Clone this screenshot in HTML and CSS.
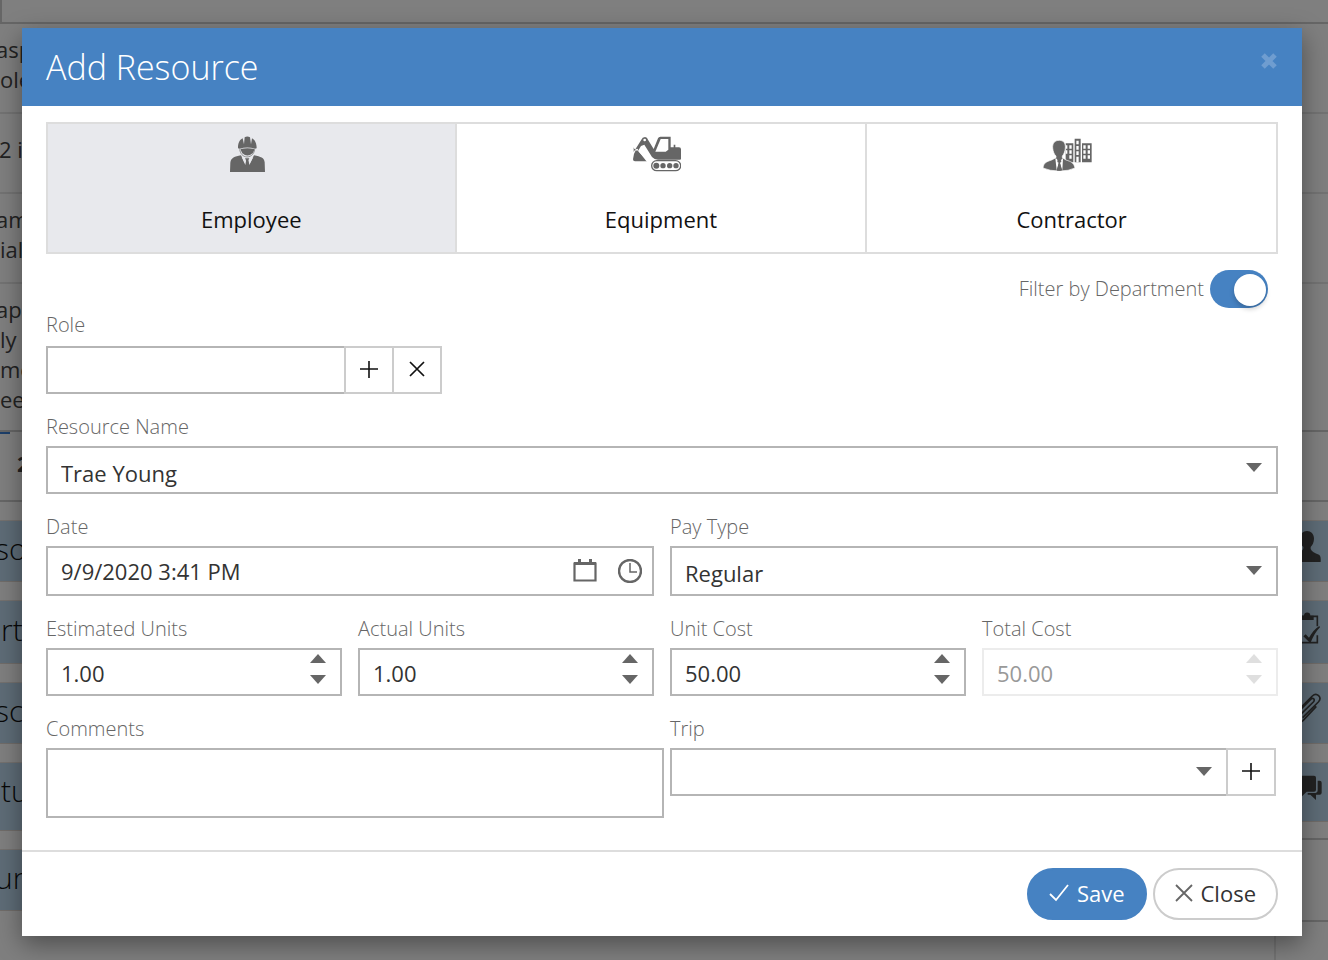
FILE: index.html
```html
<!DOCTYPE html>
<html lang="en">
<head>
<meta charset="utf-8">
<title>Add Resource</title>
<link rel="stylesheet" href="styles.css">
</head>
<body>
<div class="page" aria-hidden="true">
  <div class="page-top"></div>
  <div class="page-row">asp<br>ole</div>
  <div class="page-row page-row-single">2 i</div>
  <div class="page-row">am<br>ial</div>
  <div class="page-row page-row-tall">ap<br>ly<br>me<br>een</div>
  <div class="page-row page-row-total"><span class="marker"></span><b>2</b></div>
  <div class="page-columns">
    <div class="sections">
      <div class="section">so</div>
      <div class="section section-mid section-inset">rt</div>
      <div class="section">sc</div>
      <div class="section section-large section-inset">tu</div>
      <div class="section">urc</div>
    </div>
    <div class="sections sections-right">
      <div class="section"><svg width="28" height="34" viewBox="108 150 84 102"><path d="M147 153c12 0 21 9 21 23 0 11-5 20-10 25v6c3 8 12 13 25 17 5 3 6 12 5 22h-80c0-16 2-22 10-26 10-4 17-8 18-15v-4c-6-6-10-14-10-25 0-14 9-23 21-23z"/></svg></div>
      <div class="section section-mid"><svg width="28" height="34" viewBox="104 390 84 102"><path d="M112 400v85h62v-22M112 406h62v30" fill="none" stroke="#444" stroke-width="5"/><path d="M126 404h8a9 9 0 1 1 19 0h10v13h-37zM132 466l7-6 10 10c8-14 18-27 31-35l2 4c-12 12-21 28-29 48z"/></svg></div>
      <div class="section"><svg width="28" height="34" viewBox="108 642 84 102"><path d="M134 719l47-47c13-15-5-30-18-18l-52 52c-16 18 8 38 24 22l40-43M122 715l44-43c7-8-1-14-8-8l-36 36" fill="none" stroke="#444" stroke-width="5"/></svg></div>
      <div class="section section-last"><svg width="28" height="34" viewBox="108 876 84 102"><path d="M114 890h54q6 0 6 6v36q0 6-6 6h-22l-14 14v-14h-18zM179 905h6q6 0 6 6v30q0 6-6 6h-11v16l-17-16h-8v-5h24q6 0 6-8z"/></svg></div>
      <div class="page-line"></div>
      <div class="page-line page-line-low"></div>
      <div class="page-edge"></div>
    </div>
  </div>
</div>

<div class="overlay">
<form class="dialog" role="dialog" aria-labelledby="dialog-title">
  <header class="dialog-header">
    <h1 class="dialog-title" id="dialog-title">Add Resource</h1>
    <button class="dismiss" type="button" aria-label="Dismiss"><svg width="18" height="18" viewBox="0 0 18 18"><path d="M3 3l12 12M15 3L3 15" stroke="#6f9dd0" stroke-width="5"/></svg></button>
  </header>

  <div class="dialog-body">
    <div class="tabs">
      <button class="tab tab-active" type="button">
        <svg class="tab-icon" width="35" height="36" viewBox="90 50 105 108"><path d="M114 87c0-16 4-25 14-30l4 18 2-21q8-5 16 0l3 21 3-18c10 6 14 15 14 30l-5 1q-23-7-46 0z"/><path d="M122 89q20-5 41 0v3l-5 10q-16 13-31 0l-5-10z"/><path d="M119 90c2 13 9 22 22 23 14-1 21-10 23-23" fill="none" stroke="#666" stroke-width="2"/><path d="M123 108l11 23 4-8-3-6h13l-3 6 5 8 12-23c21 5 30 6 32 21l1 29H90l1-28c2-15 13-18 32-22z"/><path d="M125 113l11 24 2-12-5-7zM160 113l-12 24-2-12 5-7z" fill="#e8e9ed"/></svg>
        <span>Employee</span>
      </button>
      <button class="tab" type="button">
        <svg class="tab-icon" width="48" height="36" viewBox="96 50 144 108"><path d="M98 98l23-37q3-8 11-8 7 0 9 8l17 28 13-32q2-5 7-5h31v32h9v-8h5v8h11q6 0 6 6v28q0 3-3 3h-66q-11 0-18-8l-23-37-10 4-9 15 29 31H102q-6 0-6-6 1-17 9-29-7-1-7-7z"/><path d="M179 59h23v32l-8 6h-31z" fill="#fff"/><circle cx="131" cy="62" r="4" fill="#fff"/><circle cx="108" cy="91" r="3" fill="#fff"/><path d="M122 88l-8 9 27 35 9-2z" fill="#fff"/><rect x="152" y="124" width="87" height="30" rx="15" fill="#fff" stroke="#666" stroke-width="4"/><circle cx="166" cy="139" r="9"/><circle cx="186" cy="139" r="8"/><circle cx="206" cy="139" r="8"/><circle cx="225" cy="139" r="8"/></svg>
        <span>Equipment</span>
      </button>
      <button class="tab" type="button">
        <svg class="tab-icon" width="49" height="36" viewBox="70 47 147 108"><path d="M138 69h23v57h-23zM165 55h18v71h-18zM187 69h29v57h-29z"/><path d="M138 75h5v10h-5zM149 75h7v10h-7zM138 90h5v10h-5zM149 90h7v10h-7zM149 105h7v10h-7zM170 61h7v11h-7zM170 77h7v11h-7zM170 93h7v11h-7zM170 109h7v17h-7zM191 75h7v10h-7zM204 75h7v10h-7zM191 90h7v10h-7zM204 90h7v10h-7zM191 105h7v10h-7zM204 105h7v10h-7z" fill="#fff"/><path d="M119 60c13 0 19 9 18 23-1 11-5 20-9 24v5l11 7c15 5 23 7 27 24q-18 9-47 9t-49-9c2-17 12-19 26-24l13-7v-5c-5-4-9-13-10-24-1-14 6-23 20-23z" stroke="#fff" stroke-width="2"/><path d="M107 114l4 36 7-24-7-11zM130 114l-2 36-8-24 7-11z" fill="#fff"/><path d="M114 118l5 4 5-4 1 7-4 2 5 24h-14l5-24-4-2z"/></svg>
        <span>Contractor</span>
      </button>
    </div>

    <div class="filter">
      <label for="filter">Filter by Department</label>
      <input class="toggle" id="filter" type="checkbox" role="switch" checked>
    </div>

    <div class="fields">
      <div class="field field-role">
        <label for="role">Role</label>
        <div class="group group-role">
          <input class="control" id="role" type="text">
          <button class="add" type="button" aria-label="Add role"><svg width="18" height="18" viewBox="0 0 18 18"><path d="M9 0v17M0 8h18" stroke="#111" stroke-width="1.6"/></svg></button>
          <button class="add" type="button" aria-label="Clear role"><svg width="18" height="18" viewBox="0 0 18 18"><path d="M2 1l14 14M16 1L2 15" stroke="#111" stroke-width="1.7"/></svg></button>
        </div>
      </div>

      <div class="field field-full">
        <label for="name">Resource Name</label>
        <div class="stack">
          <select class="control control-low" id="name"><option>Trae Young</option></select>
          <svg class="arrow arrow-high" width="16" height="10" viewBox="0 0 16 10"><path d="M0 0h16L8 9z"/></svg>
        </div>
      </div>

      <div class="field field-half">
        <label for="date">Date</label>
        <div class="stack">
          <input class="control control-date" id="date" type="text" value="9/9/2020 3:41 PM">
          <div class="pickers">
            <button class="picker" type="button" aria-label="Pick date"><svg width="24" height="24" viewBox="0 0 24 24"><path d="M1.500 4.500h21v17h-21z" fill="none" stroke="#666" stroke-width="2.200"/><path d="M1 3h22v3H1zM5 0h3v4H5zM16 0h3v4h-3z"/></svg></button>
            <button class="picker" type="button" aria-label="Pick time"><svg width="24" height="24" viewBox="0 0 24 24"><circle cx="12" cy="12" r="11" fill="none" stroke="#666" stroke-width="2.4"/><path d="M12 4v9h7" fill="none" stroke="#666" stroke-width="1.500"/></svg></button>
          </div>
        </div>
      </div>

      <div class="field field-half">
        <label for="pay">Pay Type</label>
        <div class="stack">
          <select class="control control-tall" id="pay"><option>Regular</option></select>
          <svg class="arrow" width="16" height="10" viewBox="0 0 16 10"><path d="M0 0h16L8 9z"/></svg>
        </div>
      </div>

      <div class="field">
        <label for="estimated">Estimated Units</label>
        <div class="stack">
          <input class="control control-number" id="estimated" type="text" inputmode="decimal" value="1.00">
          <div class="spin">
            <button type="button" aria-label="Increase estimated units"><svg width="16" height="10" viewBox="0 0 16 10"><path d="M0 9h16L8 0z"/></svg></button>
            <button type="button" aria-label="Decrease estimated units"><svg width="16" height="10" viewBox="0 0 16 10"><path d="M0 1h16L8 10z"/></svg></button>
          </div>
        </div>
      </div>
      <div class="field">
        <label for="actual">Actual Units</label>
        <div class="stack">
          <input class="control control-number" id="actual" type="text" inputmode="decimal" value="1.00">
          <div class="spin">
            <button type="button" aria-label="Increase actual units"><svg width="16" height="10" viewBox="0 0 16 10"><path d="M0 9h16L8 0z"/></svg></button>
            <button type="button" aria-label="Decrease actual units"><svg width="16" height="10" viewBox="0 0 16 10"><path d="M0 1h16L8 10z"/></svg></button>
          </div>
        </div>
      </div>
      <div class="field">
        <label for="unit">Unit Cost</label>
        <div class="stack">
          <input class="control control-number" id="unit" type="text" inputmode="decimal" value="50.00">
          <div class="spin">
            <button type="button" aria-label="Increase unit cost"><svg width="16" height="10" viewBox="0 0 16 10"><path d="M0 9h16L8 0z"/></svg></button>
            <button type="button" aria-label="Decrease unit cost"><svg width="16" height="10" viewBox="0 0 16 10"><path d="M0 1h16L8 10z"/></svg></button>
          </div>
        </div>
      </div>
      <div class="field">
        <label for="total">Total Cost</label>
        <div class="stack">
          <input class="control control-number" id="total" type="text" value="50.00" disabled>
          <div class="spin spin-off">
            <button type="button" disabled aria-label="Increase total cost"><svg width="16" height="10" viewBox="0 0 16 10"><path d="M0 9h16L8 0z"/></svg></button>
            <button type="button" disabled aria-label="Decrease total cost"><svg width="16" height="10" viewBox="0 0 16 10"><path d="M0 1h16L8 10z"/></svg></button>
          </div>
        </div>
      </div>

      <div class="field field-half">
        <label for="comments">Comments</label>
        <textarea class="control comments" id="comments"></textarea>
      </div>
      <div class="field field-half">
        <label for="trip">Trip</label>
        <div class="group group-trip">
          <div class="stack">
            <select class="control" id="trip"><option></option></select>
            <svg class="arrow" width="16" height="10" viewBox="0 0 16 10"><path d="M0 0h16L8 9z"/></svg>
          </div>
          <button class="add" type="button" aria-label="Add trip"><svg width="18" height="18" viewBox="0 0 18 18"><path d="M9 0v17M0 8h18" stroke="#111" stroke-width="1.6"/></svg></button>
        </div>
      </div>
    </div>
  </div>

  <footer class="dialog-footer">
    <button class="action action-save" type="submit"><svg width="20" height="18" viewBox="0 0 20 18"><path d="M1 10l6 6L19 1" fill="none" stroke="#fff" stroke-width="1.8"/></svg>Save</button>
    <button class="action" type="button"><svg width="18" height="18" viewBox="0 0 18 18"><path d="M1 1l16 16M17 1L1 17" stroke="#666" stroke-width="1.8"/></svg>Close</button>
  </footer>
</form>
</div>
</body>
</html>
```

FILE: styles.css
```css
* {
  box-sizing: border-box;
}

body {
  margin: 0;
  min-height: 100vh;
  overflow: hidden;
  font-family: "Open Sans", sans-serif;
  font-size: 22px;
  color: #333;
  background: #fff;
}

button,
input,
select,
textarea {
  margin: 0;
  font: inherit;
  color: inherit;
}

button {
  padding: 0;
  border: 0;
  background: none;
  cursor: pointer;
}

svg {
  display: block;
  flex: none;
  fill: #666;
}

/* Page behind the dialog */

.page {
  height: 100vh;
  overflow: hidden;
  line-height: 30px;
  color: #444;
}

.page-top {
  height: 24px;
  border-bottom: 2px solid #ccc;
  border-left: 2px solid #ccc;
}

.page-row {
  height: 90px;
  padding-top: 10px;
  border-bottom: 2px solid #e6e6e6;
  text-indent: -4px;
}

.page-row-single {
  height: 80px;
  padding-top: 20px;
  text-indent: -1px;
}

.page-row-tall {
  height: 148px;
  border-color: #ccc;
}

.page-row-total {
  display: flex;
  flex-direction: column;
  height: 70px;
  padding: 0 0 0 17px;
  border-color: #ccc;
  text-indent: 0;
}

.marker {
  width: 10px;
  height: 2px;
  margin: 0 0 14px -17px;
  background: #3a7fd5;
}

.page-columns {
  display: flex;
  justify-content: space-between;
  padding-top: 18px;
}

.sections {
  display: flex;
  flex-direction: column;
  gap: 18px;
  width: 60px;
}

.section {
  display: flex;
  align-items: center;
  height: 62px;
  padding-bottom: 4px;
  border-top: 1px solid #e9e3df;
  border-bottom: 1px solid #e0d8d3;
  background: #bdd9ee;
  font-size: 30px;
  font-weight: 300;
  color: #111;
  text-indent: -5px;
}

.section-inset {
  text-indent: 1px;
}

.section-mid {
  height: 64px;
}

.section-large {
  height: 69px;
  padding-bottom: 12px;
}

.section-last {
  height: 60px;
}

.section svg {
  fill: #444;
}

.sections-right .section {
  justify-content: flex-end;
  padding: 0 6px 8px 0;
}

.page-line {
  height: 2px;
  margin-top: -2px;
  background: #ccc;
}

.page-line-low {
  margin-top: 62px;
}

.page-edge {
  height: 60px;
  margin: -18px 0 0 6px;
  border-left: 2px solid #e6e6e6;
}

/* Dialog */

.overlay {
  position: absolute;
  inset: 0;
  padding: 28px 26px 24px 22px;
  background: rgba(0, 0, 0, 0.5);
}

.dialog {
  background: #fff;
  box-shadow: 0 8px 24px rgba(0, 0, 0, 0.4);
}

.dialog-header {
  display: flex;
  justify-content: space-between;
  align-items: flex-start;
  padding: 16px 24px;
  background: #4682c2;
}

.dialog-title {
  margin: 0;
  font-size: 34px;
  font-weight: 300;
  line-height: 46px;
  color: #fff;
}

.dismiss {
  padding-top: 8px;
}

.dialog-body {
  padding: 16px 24px 32px;
}

.tabs {
  display: grid;
  grid-template-columns: 100fr 101fr 101fr;
  border: 2px solid #ddd;
}

.tab {
  display: flex;
  flex-direction: column;
  align-items: center;
  gap: 32px;
  padding: 12px 0 18px;
  line-height: 30px;
  color: #111;
}

.tab + .tab {
  border-left: 2px solid #ddd;
}

.tab-active {
  background: #e8e9ed;
}

.tab-icon {
  margin-right: 8px;
}

.filter {
  display: flex;
  justify-content: flex-end;
  align-items: center;
  gap: 6px;
  margin: 16px 10px 3px 0;
}

label {
  font-size: 20px;
  font-weight: 300;
  line-height: 28px;
  color: #666;
}

.toggle {
  display: flex;
  justify-content: flex-end;
  appearance: none;
  width: 58px;
  height: 38px;
  padding: 4px 2px;
  border-radius: 19px;
  background: #4682c2;
}

.toggle::before {
  content: "";
  width: 32px;
  height: 32px;
  border-radius: 50%;
  background: #fff;
  box-shadow: 0 3px 5px rgba(0, 0, 0, 0.2);
}

.toggle:not(:checked) {
  justify-content: flex-start;
  background: #bbb;
}

.fields {
  display: grid;
  grid-template-columns: repeat(4, 1fr);
  gap: 19px 16px;
}

.field {
  display: flex;
  flex-direction: column;
  gap: 5px;
  min-width: 0;
}

.field-role {
  grid-column: span 4;
  gap: 7px;
}

.field-full {
  grid-column: span 4;
}

.field-half {
  grid-column: span 2;
}

.stack {
  display: grid;
  grid-template-columns: 1fr;
}

.stack > * {
  grid-area: 1 / 1;
}

.control {
  appearance: none;
  width: 100%;
  height: 48px;
  padding: 0 13px;
  border: 2px solid #b5b5b5;
  border-radius: 0;
  outline: 0;
  background: #fff;
}

.control-low {
  padding-top: 6px;
}

.control-number {
  padding-top: 2px;
}

.control-date,
.control-tall {
  height: 50px;
}

.control-tall {
  padding-top: 4px;
}

.control:disabled {
  border-color: #ececec;
  color: #999;
}

.comments {
  width: calc(100% + 10px);
  height: 70px;
  resize: none;
}

.arrow {
  align-self: center;
  justify-self: end;
  margin-right: 16px;
  pointer-events: none;
}

.arrow-high {
  margin-bottom: 4px;
}

.spin {
  display: flex;
  flex-direction: column;
  justify-self: end;
  gap: 10px;
  padding: 6px 16px 0 0;
}

.spin-off {
  opacity: 0.2;
}

.pickers {
  display: flex;
  align-items: center;
  justify-self: end;
  gap: 21px;
  padding-right: 12px;
}

.group {
  display: flex;
}

.group-role {
  width: 396px;
}

.group-trip {
  margin-right: 2px;
}

.group .stack {
  flex: 1;
}

.add {
  display: flex;
  flex: none;
  align-items: center;
  justify-content: center;
  width: 50px;
  height: 48px;
  margin-left: -2px;
  border: 2px solid #ccc;
  background: #fff;
}

.dialog-footer {
  display: flex;
  justify-content: flex-end;
  gap: 6px;
  padding: 16px 24px;
  border-top: 2px solid #ddd;
}

.action {
  display: flex;
  align-items: center;
  gap: 8px;
  height: 52px;
  padding: 0 20px 2px;
  border: 2px solid #ccc;
  border-radius: 26px;
  background: #fff;
}

.action-save {
  border-color: #4682c2;
  background: #4682c2;
  color: #fff;
}
```
